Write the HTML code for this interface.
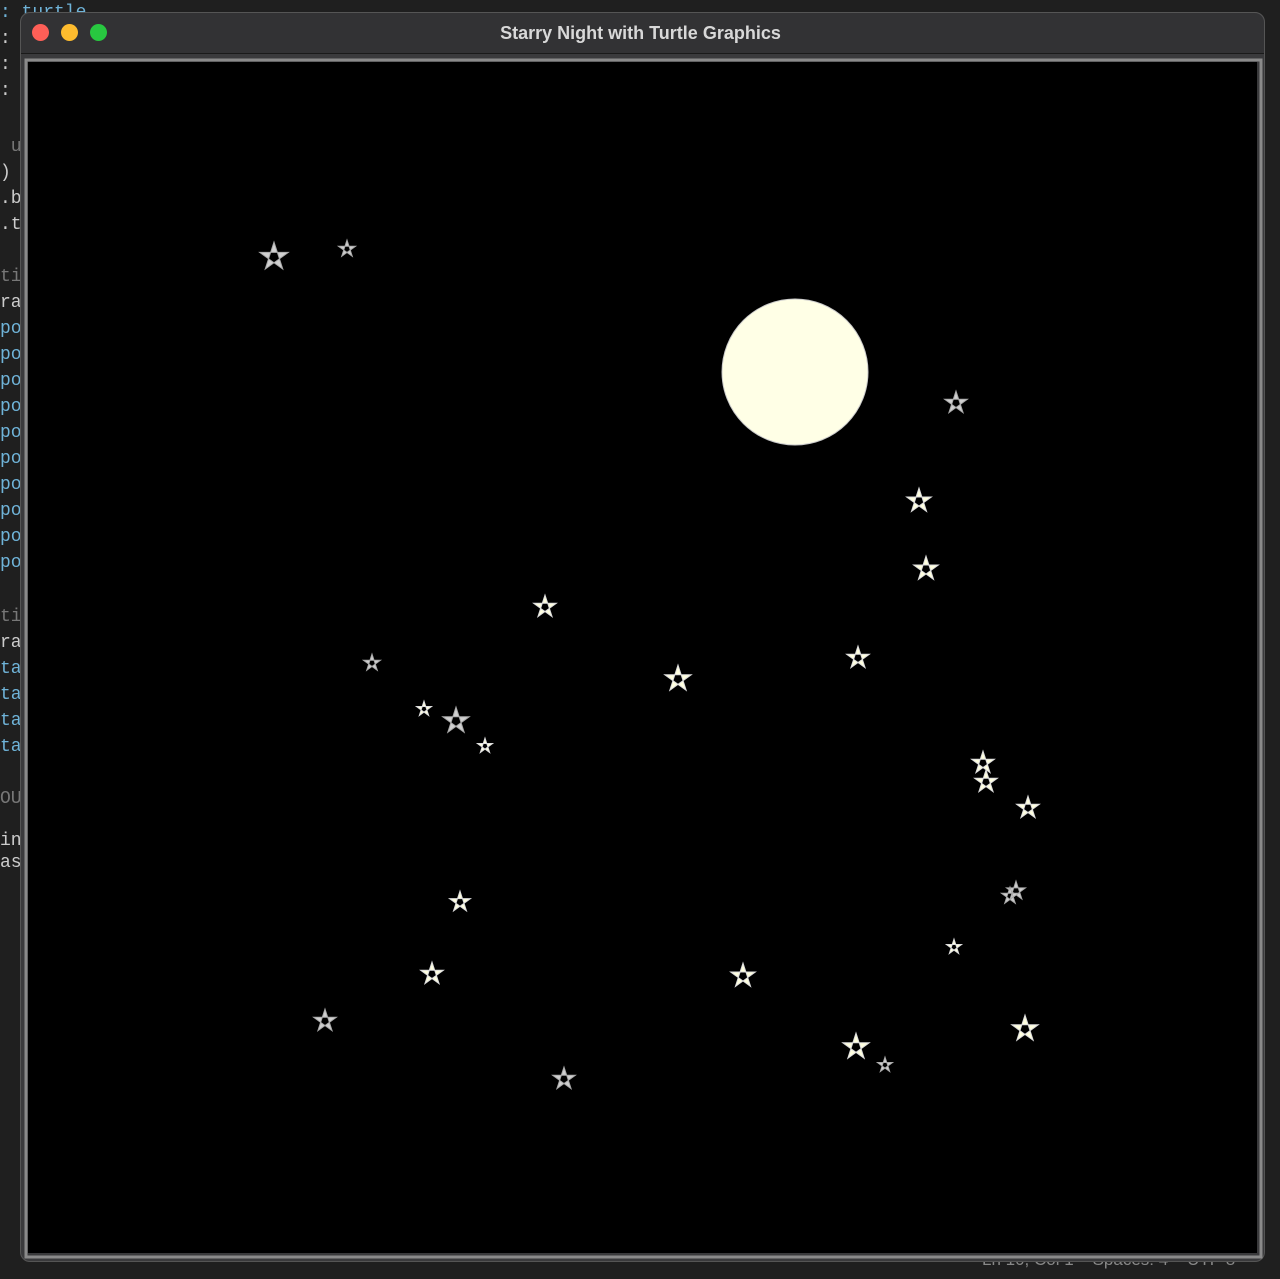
<!DOCTYPE html>
<html><head><meta charset="utf-8"><style>
html,body{margin:0;padding:0;width:1280px;height:1279px;overflow:hidden;background:#1f1f1f;font-family:"Liberation Sans",sans-serif}
.code{position:absolute;left:0;font:18px/26px "Liberation Mono",monospace;color:#ccc;white-space:pre}
.b{color:#6fb3d8}.g{color:#777}
.win{position:absolute;left:20px;top:12px;width:1245px;height:1250px;background:#3a3a3c;border-radius:10px;border:1px solid #555;box-sizing:border-box}
.title{position:absolute;left:0;top:0;width:100%;height:40px;background:#323234;border-radius:10px 10px 0 0;border-bottom:1px solid #1a1a1a;text-align:center;line-height:40px;color:#d8d8d8;font-weight:bold;font-size:18px;text-indent:-4px}
.dot{position:absolute;top:11px;width:17px;height:17px;border-radius:50%}
.status{position:absolute;top:1250px;left:982px;color:#888;font-size:17px}
</style></head><body>
<div class="code" style="top:0px"><span class="b">: turtle</span><br>: r<br>: t<br>: t</div>
<div class="code g" style="top:134px"> up</div>
<div class="code" style="top:160px">) =<br>.b<br>.t</div>
<div class="code g" style="top:264px">ti</div>
<div class="code" style="top:290px">raw</div>
<div class="code b" style="top:316px">por<br>por<br>por<br>por<br>por<br>por<br>por<br>por<br>por<br>por</div>
<div class="code g" style="top:604px">ti</div>
<div class="code" style="top:630px">raw</div>
<div class="code b" style="top:656px">tar<br>tar<br>tar<br>tar</div>
<div class="code g" style="top:786px">OU</div>
<div class="code" style="top:830px;line-height:22px">in,<br>asr</div>
<div class="status">Ln 10, Col 1&nbsp;&nbsp;&nbsp;&nbsp;Spaces: 4&nbsp;&nbsp;&nbsp;&nbsp;UTF-8</div>
<div class="win">
<div class="title">Starry Night with Turtle Graphics</div>
<div class="dot" style="left:11px;background:#fe5f57"></div>
<div class="dot" style="left:40px;background:#febc2e"></div>
<div class="dot" style="left:69px;background:#28c840"></div>
</div>
<svg id="s" width="1280" height="1279" style="position:absolute;left:0;top:0">
<rect x="26" y="60" width="1235" height="1197" fill="none" stroke="#8a8a8a" stroke-width="3"/>
<rect x="28" y="62" width="1229" height="1191" fill="#000"/>
<circle cx="795" cy="372" r="73" fill="#ffffe6" stroke="#ccc" stroke-width="1"/>
</svg>
<script>
var stars=[[274,256,15,0],[347,248,9,0],[956,402,12,0],[919,500,13,1],[926,568,13,1],[545,606,12,1],[372,662,9,0],[858,657,12,1],[678,678,14,1],[424,708,8,1],[456,720,14,0],[485,745,8,1],[983,762,12,1],[986,781,12,1],[1028,807,12,1],[1016,890,10,0],[1010,895,9,0],[460,901,11,1],[954,946,8,1],[432,973,12,1],[743,975,13,1],[325,1020,12,0],[1025,1028,14,1],[856,1046,14,1],[885,1064,8,0],[564,1078,12,0]];
var svg=document.getElementById('s'),h='';
stars.forEach(function(s){var p=[];for(var k=0;k<5;k++){var i=(k*2)%5,a=-Math.PI/2+i*2*Math.PI/5;p.push((s[0]+s[2]*Math.cos(a)).toFixed(1)+','+(s[1]+1+s[2]*Math.sin(a)).toFixed(1));}
h+='<polygon points="'+p.join(' ')+'" fill="'+(s[3]?'#ffffe0':'#d0d0d0')+'" fill-rule="evenodd" stroke="'+(s[3]?'#ddd':'#aaa')+'" stroke-width="1"/>';});
svg.insertAdjacentHTML('beforeend',h);
</script>
</body></html>
